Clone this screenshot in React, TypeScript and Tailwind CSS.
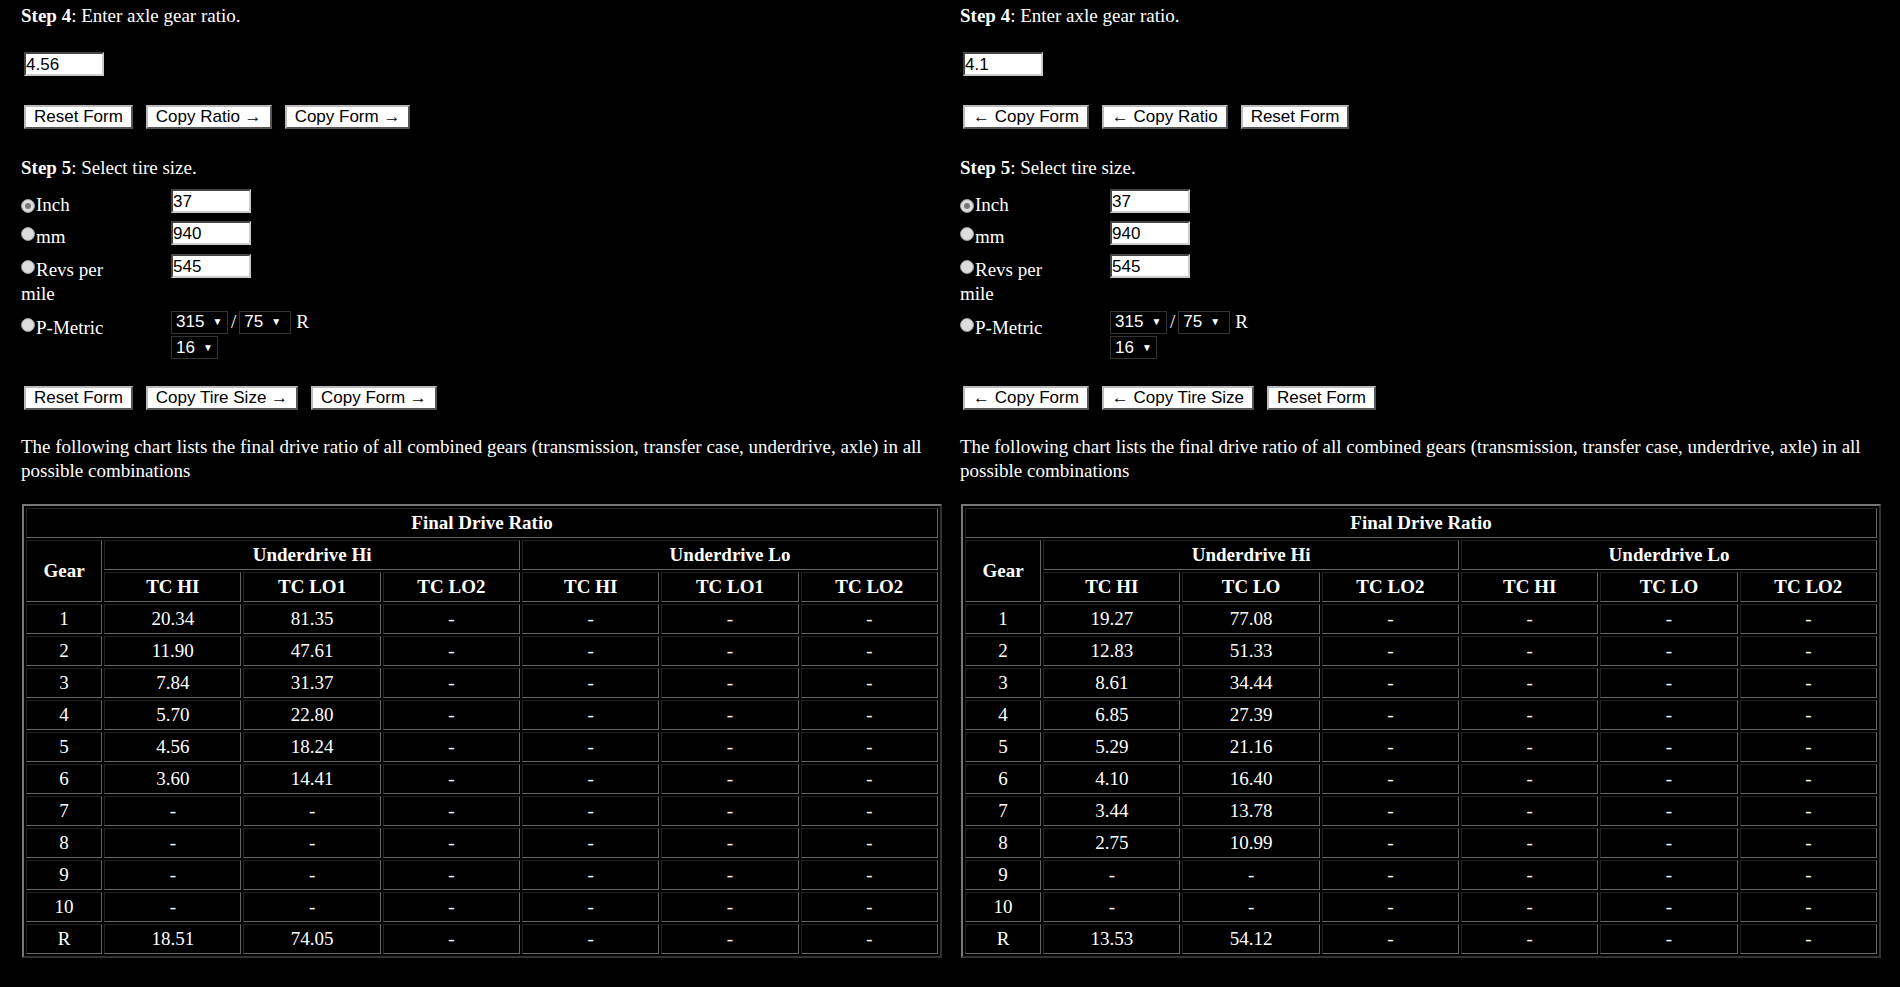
import React from "react";

const serif = { fontFamily: '"Liberation Serif", serif' };

function Btn({ children }: { children: React.ReactNode }) {
  return (
    <button className="h-[24px] px-[8px] bg-white text-black text-[17px] leading-[20px] border-2 border-t-[#bbb] border-l-[#bbb] border-r-[#555] border-b-[#555]" style={{ fontFamily: '"Liberation Sans", sans-serif' }}>
      {children}
    </button>
  );
}

function Inp({ v, w = 80 }: { v: string; w?: number }) {
  return (
    <div className="h-[24px] bg-white text-black text-[17px] leading-[22px] border-2 border-t-[#444] border-l-[#444] border-r-[#ccc] border-b-[#ccc]" style={{ width: w, fontFamily: '"Liberation Sans", sans-serif' }}>
      {v}
    </div>
  );
}

function Sel({ v, w }: { v: string; w: number }) {
  return (
    <div className="h-[23px] bg-black text-white text-[17px] leading-[20px] border border-[#333] flex items-center gap-[8px] pl-[4px]" style={{ width: w, fontFamily: '"Liberation Sans", sans-serif' }}>
      {v}<span className="text-[10px]">▼</span>
    </div>
  );
}

function Radio({ on }: { on?: boolean }) {
  return (
    <span className="inline-flex w-[14px] h-[14px] rounded-full bg-[#ddd] border border-[#999] items-center justify-center mr-[1px] align-[2px]">
      {on && <span className="w-[6px] h-[6px] rounded-full bg-[#777]" />}
    </span>
  );
}

const cell = "border border-t-[#222] border-l-[#222] border-r-[#666] border-b-[#666] text-center h-[30px] p-0";

function Table({ data, lo }: { data: string[][]; lo: string }) {
  const gears = ["1", "2", "3", "4", "5", "6", "7", "8", "9", "10", "R"];
  return (
    <table className="w-[920px] border-separate border-spacing-[2px] border-2 border-t-[#777] border-l-[#777] border-r-[#333] border-b-[#333] text-white text-[19px]" style={serif}>
      <colgroup>
        <col style={{ width: 76 }} />
        {[0, 1, 2, 3, 4, 5].map((i) => <col key={i} style={{ width: 137 }} />)}
      </colgroup>
      <thead className="font-bold">
        <tr><th colSpan={7} className={cell}>Final Drive Ratio</th></tr>
        <tr>
          <th rowSpan={2} className={cell}>Gear</th>
          <th colSpan={3} className={cell}>Underdrive Hi</th>
          <th colSpan={3} className={cell}>Underdrive Lo</th>
        </tr>
        <tr>
          {["TC HI", lo, "TC LO2", "TC HI", lo, "TC LO2"].map((h, i) => <th key={i} className={cell}>{h}</th>)}
        </tr>
      </thead>
      <tbody>
        {gears.map((g, i) => (
          <tr key={g}>
            <td className={cell}>{g}</td>
            <td className={cell}>{data[i][0]}</td>
            <td className={cell}>{data[i][1]}</td>
            {[0, 1, 2, 3].map((k) => <td key={k} className={cell}>-</td>)}
          </tr>
        ))}
      </tbody>
    </table>
  );
}

function Panel({ ratio, b1, b2, data, lo }: { ratio: string; b1: string[]; b2: string[]; data: string[][]; lo: string }) {
  return (
    <div className="w-[922px] text-white text-[19px] leading-[24px]" style={serif}>
      <div className="pt-[4px]"><b>Step 4</b>: Enter axle gear ratio.</div>
      <div className="mt-[24px] ml-[3px]"><Inp v={ratio} /></div>
      <div className="mt-[29px] ml-[3px] flex gap-[13px]">{b1.map((b) => <Btn key={b}>{b}</Btn>)}</div>
      <div className="mt-[27px]"><b>Step 5</b>: Select tire size.</div>
      <div className="mt-[13px] flex">
        <div className="w-[150px]">
          <div className="h-[32px]"><Radio on />Inch</div>
          <div className="h-[33px]"><Radio />mm</div>
          <div className="h-[58px] leading-[24px]"><Radio />Revs per<br />mile</div>
          <div><Radio />P-Metric</div>
        </div>
        <div className="pt-[-2px]">
          <div className="h-[32px] -mt-[4px]"><Inp v="37" /></div>
          <div className="h-[33px]"><Inp v="940" /></div>
          <div className="h-[56px]"><Inp v="545" /></div>
          <div className="flex items-center gap-[3px]"><Sel v="315" w={57} /><span>/</span><Sel v="75" w={52} /><span className="ml-[2px]">R</span></div>
          <div className="mt-[2px]"><Sel v="16" w={47} /></div>
        </div>
      </div>
      <div className="mt-[27px] ml-[3px] flex gap-[13px]">{b2.map((b) => <Btn key={b}>{b}</Btn>)}</div>
      <p className="mt-[25px]">The following chart lists the final drive ratio of all combined gears (transmission, transfer case, underdrive, axle) in all possible combinations</p>
      <div className="mt-[21px] ml-[1px]"><Table data={data} lo={lo} /></div>
    </div>
  );
}

const dL = [["20.34", "81.35"], ["11.90", "47.61"], ["7.84", "31.37"], ["5.70", "22.80"], ["4.56", "18.24"], ["3.60", "14.41"], ["-", "-"], ["-", "-"], ["-", "-"], ["-", "-"], ["18.51", "74.05"]];
const dR = [["19.27", "77.08"], ["12.83", "51.33"], ["8.61", "34.44"], ["6.85", "27.39"], ["5.29", "21.16"], ["4.10", "16.40"], ["3.44", "13.78"], ["2.75", "10.99"], ["-", "-"], ["-", "-"], ["13.53", "54.12"]];

export default function App() {
  return (
    <div className="bg-black min-h-[987px] w-[1900px] overflow-hidden flex gap-[18px] px-[21px]">
      <Panel ratio="4.56" b1={["Reset Form", "Copy Ratio →", "Copy Form →"]} b2={["Reset Form", "Copy Tire Size →", "Copy Form →"]} data={dL} lo="TC LO1" />
      <Panel ratio="4.1" b1={["← Copy Form", "← Copy Ratio", "Reset Form"]} b2={["← Copy Form", "← Copy Tire Size", "Reset Form"]} data={dR} lo="TC LO" />
    </div>
  );
}
